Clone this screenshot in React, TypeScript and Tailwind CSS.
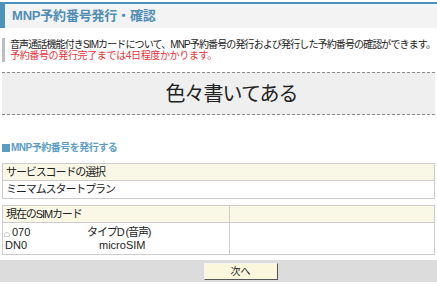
import React from "react";

const jp = "font-['Liberation_Sans','Noto_Sans_CJK_JP',sans-serif]";

export default function App() {
  return (
    <div className={`w-[437px] h-[285px] bg-white text-[#222] ${jp} overflow-hidden`}>
      {/* Title bar */}
      <div className="mt-[2px] h-[26px] border-t-[2px] border-l-[5px] border-[#4a94ba] bg-[#f3f3f3] flex items-center pl-[7px]">
        <h1 className="text-[13px] font-bold tracking-[-0.2px] text-[#4f8db5]">MNP予約番号発行・確認</h1>
      </div>

      {/* Notice */}
      <div className="mt-[10px] ml-[2px] border-l-[3px] border-[#bdbdbd] pl-[5px] py-[1px] text-[10px] leading-[11px] tracking-[-0.88px] whitespace-nowrap">
        <p>音声通話機能付きSIMカードについて、MNP予約番号の発行および発行した予約番号の確認ができます。</p>
        <p className="text-[#e8333a] tracking-[-0.35px]">予約番号の発行完了までは4日程度かかります。</p>
      </div>

      {/* Placeholder box */}
      <div className="mt-[10px] mx-[2px] h-[43px] border-y border-dashed border-[#888] bg-[#efefef] flex items-center justify-center pl-[26px]">
        <span className="text-[20px] tracking-[-1px] text-[#222]">色々書いてある</span>
      </div>

      {/* Section heading */}
      <h2 className="mt-[27px] ml-[2px] text-[10px] leading-[12px] font-bold tracking-[-0.5px] text-[#5b9dc5] flex items-center">
        <span className="w-[8px] h-[8px] bg-[#5b9dc5] mr-[1px]" />
        MNP予約番号を発行する
      </h2>

      {/* Service code table */}
      <div className="mt-[9px] mx-[2px] border border-[#cccccc] text-[11px] tracking-[-1.1px]">
        <div className="h-[17px] bg-[#f9f7e5] border-b border-[#cccccc] flex items-center pl-[3px]">サービスコードの選択</div>
        <div className="h-[17px] flex items-center pl-[3px]">ミニマムスタートプラン</div>
      </div>

      {/* Current SIM table */}
      <div className="mt-[6px] mx-[2px] border border-[#cccccc] text-[11px] tracking-[-1.1px] grid grid-cols-[227px_1fr]">
        <div className="h-[17px] bg-[#f9f7e5] border-b border-r border-[#cccccc] flex items-center pl-[3px]">現在のSIMカード</div>
        <div className="h-[17px] bg-[#f9f7e5] border-b border-[#cccccc]" />
        <div className="h-[31px] border-r border-[#cccccc] pl-[1px] pt-[3px] leading-[13px]">
          <div className="flex items-center">
            <span className="w-[6px] h-[5px] mt-[3px] mr-[2px] border border-[#ccc] rounded-t-[3px]" />
            <span className="w-[75px] tracking-normal">070</span>
            <span>タイプD (音声)</span>
          </div>
          <div className="flex items-center pl-[1px]">
            <span className="w-[94px] tracking-normal">DN0</span>
            <span className="tracking-normal">microSIM</span>
          </div>
        </div>
        <div className="h-[31px]" />
      </div>

      {/* Action bar */}
      <div className="mt-[5px] h-[22px] bg-[#dcdcdc] flex items-center justify-center">
        <button className="ml-[44px] w-[74px] h-[17px] bg-[#fbf7dd] border border-t-[#f5f5f5] border-l-[#f5f5f5] border-r-[#555] border-b-[#555] text-[10px] text-[#222] flex items-center justify-center">
          次へ
        </button>
      </div>
    </div>
  );
}
